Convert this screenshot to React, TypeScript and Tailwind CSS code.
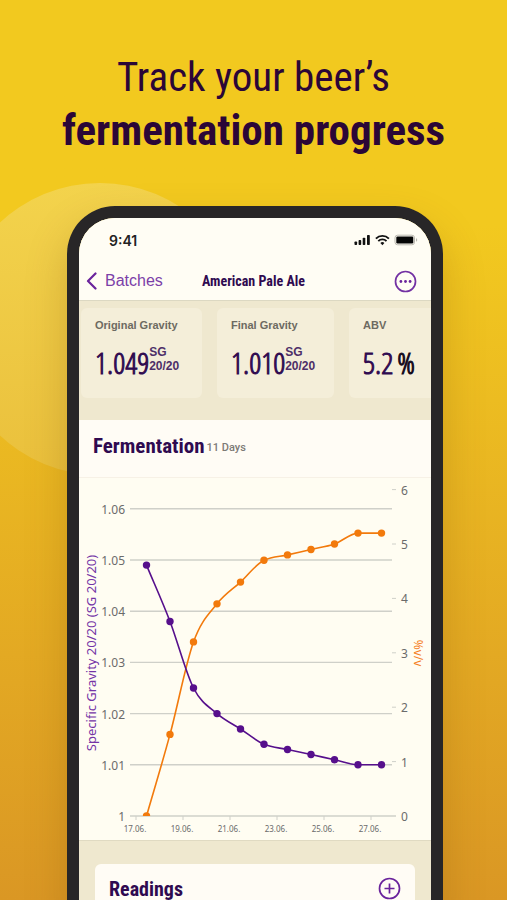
const readings = [
  { gravity: 1.049, abv: 0 },
  { gravity: 1.038, abv: 1.5 },
  { gravity: 1.025, abv: 3.2 },
  { gravity: 1.02, abv: 3.9 },
  { gravity: 1.017, abv: 4.3 },
  { gravity: 1.014, abv: 4.7 },
  { gravity: 1.013, abv: 4.8 },
  { gravity: 1.012, abv: 4.9 },
  { gravity: 1.011, abv: 5 },
  { gravity: 1.01, abv: 5.2 },
  { gravity: 1.01, abv: 5.2 },
];

type Point = { x: number; y: number };

const BASELINE = 338;
const pointX = (i: number) => 67.5 + i * 23.5;
const gravityY = (v: number) => BASELINE - (v - 1) * 5120;
const abvY = (v: number) => BASELINE - v * 54.4;

/** Smooth path through the points that never overshoots them. */
function monotonePath(pts: Point[]): string {
  const n = pts.length;
  const slopes = pts.slice(1).map((p, i) => (p.y - pts[i].y) / (p.x - pts[i].x));
  const tangents = pts.map((_, i) => {
    if (i === 0) return slopes[0];
    if (i === n - 1) return slopes[n - 2];
    const a = slopes[i - 1];
    const b = slopes[i];
    if (a * b <= 0) return 0;
    return Math.sign(a) * Math.min(Math.abs(a), Math.abs(b), Math.abs(a + b) / 4) * 2;
  });
  let d = `M${pts[0].x},${pts[0].y}`;
  for (let i = 1; i < n; i++) {
    const dx = (pts[i].x - pts[i - 1].x) / 3;
    d += `C${pts[i - 1].x + dx},${pts[i - 1].y + tangents[i - 1] * dx} ${pts[i].x - dx},${
      pts[i].y - tangents[i] * dx
    } ${pts[i].x},${pts[i].y}`;
  }
  return d;
}

function Series({ points, color }: { points: Point[]; color: string }) {
  return (
    <g clipPath="url(#plot)">
      <path d={monotonePath(points)} fill="none" stroke={color} strokeWidth="1.6" />
      {points.map((p) => (
        <circle key={p.x} cx={p.x} cy={p.y} r="3.7" fill={color} />
      ))}
    </g>
  );
}

function FermentationChart() {
  const gravityTicks = ["1", "1.01", "1.02", "1.03", "1.04", "1.05", "1.06"];
  const dates = ["17.06.", "19.06.", "21.06.", "23.06.", "25.06.", "27.06."];
  return (
    <svg
      viewBox="0 0 352 362"
      className="block h-auto w-full font-['Noto_Sans','Open_Sans',sans-serif]"
      role="img"
      aria-label="Specific gravity and alcohol by volume over 11 days"
    >
      <defs>
        <clipPath id="plot">
          <rect x="50" y="0" width="270" height={BASELINE} />
        </clipPath>
      </defs>
      {gravityTicks.map((label, i) => {
        const y = BASELINE - i * 51.2;
        return (
          <g key={label}>
            <line x1="51" x2={i === 0 ? 317 : 313} y1={y} y2={y} stroke="#cfd0c9" strokeWidth="1.4" />
            <text x="46" y={y + 5} textAnchor="end" fontSize="12" fill="#6b6b6b">
              {label}
            </text>
          </g>
        );
      })}
      {[0, 1, 2, 3, 4, 5, 6].map((v) => (
        <g key={v}>
          {v > 0 && <line x1="313" x2="317" y1={abvY(v)} y2={abvY(v)} stroke="#cfd0c9" />}
          <text x="322" y={abvY(v) + 5} fontSize="12" fill="#6b6b6b">
            {v}
          </text>
        </g>
      ))}
      {dates.map((label, i) => (
        <g key={label}>
          <line x1={57 + i * 47} x2={57 + i * 47} y1={BASELINE} y2={BASELINE + 4} stroke="#cfd0c9" />
          <text x={56 + i * 47} y="354" textAnchor="middle" fontSize="8" fill="#6b6b6b">
            {label}
          </text>
        </g>
      ))}
      <text transform="translate(17 175) rotate(-90)" textAnchor="middle" fontSize="13" fill="#7434a6">
        Specific Gravity 20/20 (SG 20/20)
      </text>
      <text transform="translate(335 175) rotate(90)" textAnchor="middle" fontSize="12" fill="#f5811f">
        %v/v
      </text>
      <Series color="#f27a0c" points={readings.map((r, i) => ({ x: pointX(i), y: abvY(r.abv) }))} />
      <Series color="#560f8c" points={readings.map((r, i) => ({ x: pointX(i), y: gravityY(r.gravity) }))} />
    </svg>
  );
}

function StatusIcons() {
  return (
    <svg width="64" height="12" viewBox="0 0 64 12" aria-hidden="true">
      <g fill="#111">
        <rect x="0.5" y="7.5" width="2.6" height="3.5" rx="0.8" />
        <rect x="4.6" y="6" width="2.6" height="5" rx="0.8" />
        <rect x="8.7" y="3.8" width="2.6" height="7.2" rx="0.8" />
        <rect x="13" y="1" width="2.8" height="10" rx="0.8" />
      </g>
      <g fill="none" stroke="#111" strokeWidth="1.9">
        <path d="M21.9 4.6a9.2 9.2 0 0 1 13 0" />
        <path d="M24.3 7.1a5.8 5.8 0 0 1 8.2 0" />
      </g>
      <path d="M28.4 11.2l-2-2.2a2.9 2.9 0 0 1 4 0z" fill="#111" />
      <rect x="41" y="1.2" width="19.5" height="9.6" rx="2.6" fill="none" stroke="#b9b7ae" />
      <rect x="42.3" y="2.5" width="17" height="7" rx="1.2" fill="#050505" />
      <path d="M62 4.3v3.4c1-.4 1.2-1 1.2-1.7s-.2-1.3-1.2-1.7z" fill="#b9b7ae" />
    </svg>
  );
}

function StatCard({ label, value, unit }: { label: string; value: string; unit?: string[] }) {
  return (
    <section className="h-[90px] w-[117px] shrink-0 rounded-md bg-[#f4eed9] px-[14px] pt-[9px] first:w-[121px]">
      <h2 className="text-[11px] leading-4 font-bold whitespace-nowrap text-[#6d6a61] font-['Liberation_Sans',sans-serif]">
        {label}
      </h2>
      <div className="mt-3 flex text-[#2f0a50]">
        <span className="text-[30px] leading-9 whitespace-nowrap [-webkit-text-stroke:1px] font-['Open_Sans_Condensed_Light','Roboto_Condensed',sans-serif]">
          {value}
          {!unit && <span className="ml-1 text-[#150b1c]">%</span>}
        </span>
        {unit && (
          <span className="text-[12px] leading-[14px] font-bold text-[#4d2f68] font-['Liberation_Sans',sans-serif]">
            {unit.map((line) => (
              <span key={line} className="block">
                {line}
              </span>
            ))}
          </span>
        )}
      </div>
    </section>
  );
}

export default function App() {
  return (
    <main className="relative flex h-screen flex-col overflow-hidden bg-linear-to-b from-[#f2c91f] from-25% to-[#da9724] font-['Roboto_Condensed','Liberation_Sans_Narrow',sans-serif]">
      <div className="absolute top-[183px] left-[-46px] size-[292px] rounded-full bg-linear-to-b from-[#f3d34c] to-[#eac03c]" />
      <h1 className="relative pt-[50px] text-center text-[#2b0637]">
        <span className="block text-[41px] leading-[54px]">Track your beer’s</span>
        <strong className="block text-[43px] leading-[52px] whitespace-nowrap">fermentation progress</strong>
      </h1>

      <div className="relative mr-[64px] ml-[67px] mt-[50px] flex-1 rounded-t-[48px] border-x-12 border-t-12 border-[#282627] shadow-[0_20px_40px_rgba(120,70,0,0.25)]">
        <div className="flex h-full flex-col overflow-hidden rounded-t-[36px] bg-[#efe8cf]">
          <header className="border-b border-[#dcd8c2] bg-[#fffdf4]">
            <div className="flex h-[44px] items-center justify-between pr-[13px] pl-[30px]">
              <span className="text-[14px] font-semibold text-[#222] font-['Inter',sans-serif]">9:41</span>
              <StatusIcons />
            </div>
            <nav className="grid h-[38px] grid-cols-[1fr_auto_1fr] items-center pr-[14px] pl-[7px]">
              <button type="button" className="flex items-center gap-2 justify-self-start text-[16px] text-[#7c3fa8] font-['Liberation_Sans',sans-serif]">
                <svg width="11" height="18" viewBox="0 0 11 18" fill="none" stroke="#6a239c" strokeWidth="2.2" strokeLinecap="round" strokeLinejoin="round" aria-hidden="true">
                  <path d="M9.5 1.5L2 9l7.5 7.5" />
                </svg>
                Batches
              </button>
              <strong className="pl-1 text-[14px] text-[#2f0a50]">American Pale Ale</strong>
              <button type="button" aria-label="More options" className="justify-self-end">
                <svg width="23" height="23" viewBox="0 0 23 23" fill="#6a239c" aria-hidden="true">
                  <circle cx="11.5" cy="11.5" r="10" fill="none" stroke="#7331a3" strokeWidth="1.7" />
                  <circle cx="6.9" cy="11.5" r="1.4" />
                  <circle cx="11.5" cy="11.5" r="1.4" />
                  <circle cx="16.1" cy="11.5" r="1.4" />
                </svg>
              </button>
            </nav>
          </header>

          <div className="flex shrink-0 gap-[15px] overflow-hidden pt-[7px] pb-[22px] pl-[2px]">
            <StatCard label="Original Gravity" value="1.049" unit={["SG", "20/20"]} />
            <StatCard label="Final Gravity" value="1.010" unit={["SG", "20/20"]} />
            <StatCard label="ABV" value="5.2" />
          </div>

          <section className="shrink-0 border-b border-[#e0dac2] bg-[#fffdf2]">
            <div className="flex h-[58px] items-center gap-[2px] border-b border-[#f7f1e6] bg-[#fffcf5] px-[14px] pb-1">
              <h2 className="text-[21px] font-bold text-[#2f0a50]">Fermentation</h2>
              <span className="pt-1 text-[11px] font-medium text-[#7d7a75] font-['Roboto',sans-serif]">11 Days</span>
            </div>
            <FermentationChart />
          </section>

          <section className="mx-4 mt-[23px] flex shrink-0 items-center justify-between rounded-t-md bg-[#fffcf5] px-[14px] pt-[13px] pb-4">
            <h2 className="text-[20px] leading-5 font-bold text-[#2f0a50]">Readings</h2>
            <button type="button" aria-label="Add reading">
              <svg width="23" height="23" viewBox="0 0 23 23" fill="none" stroke="#6a239c" strokeWidth="1.7" aria-hidden="true">
                <circle cx="11.5" cy="11.5" r="10" />
                <path d="M11.5 6.5v10M6.5 11.5h10" />
              </svg>
            </button>
          </section>
        </div>
      </div>
    </main>
  );
}
